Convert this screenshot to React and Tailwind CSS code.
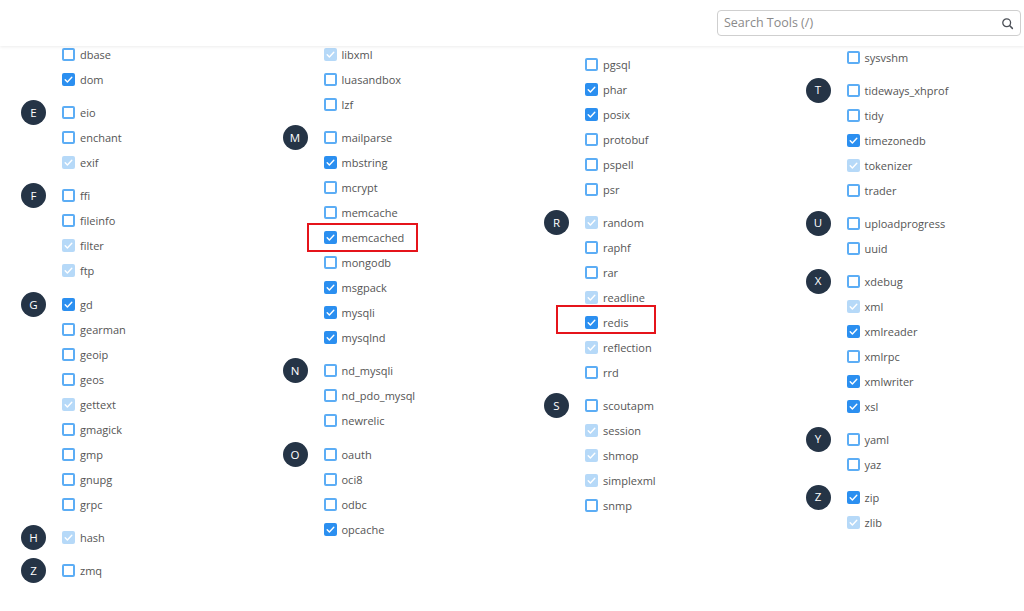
import React from "react";

// Extension list, grouped by initial letter. State: u = off, c = on, d = built-in (locked on)
const columns = [
  {
    offset: "mt-[-4.5px]",
    gap: "gap-[8.4px]",
    groups: [
      { letter: null, items: [["dbase", "u"], ["dom", "c"]] },
      { letter: "E", items: [["eio", "u"], ["enchant", "u"], ["exif", "d"]] },
      { letter: "F", items: [["ffi", "u"], ["fileinfo", "u"], ["filter", "d"], ["ftp", "d"]] },
      {
        letter: "G",
        items: [
          ["gd", "c"], ["gearman", "u"], ["geoip", "u"], ["geos", "u"], ["gettext", "d"],
          ["gmagick", "u"], ["gmp", "u"], ["gnupg", "u"], ["grpc", "u"],
        ],
      },
      { letter: "H", items: [["hash", "d"]] },
      { letter: "Z", items: [["zmq", "u"]] },
    ],
  },
  {
    offset: "mt-[-4.5px]",
    gap: "gap-[8.4px]",
    groups: [
      { letter: null, items: [["libxml", "d"], ["luasandbox", "u"], ["lzf", "u"]] },
      {
        letter: "M",
        items: [
          ["mailparse", "u"], ["mbstring", "c"], ["mcrypt", "u"], ["memcache", "u"],
          ["memcached", "c", "a"], ["mongodb", "u"], ["msgpack", "c"], ["mysqli", "c"], ["mysqlnd", "c"],
        ],
      },
      { letter: "N", items: [["nd_mysqli", "u"], ["nd_pdo_mysql", "u"], ["newrelic", "u"]] },
      { letter: "O", items: [["oauth", "u"], ["oci8", "u"], ["odbc", "u"], ["opcache", "c"]] },
    ],
  },
  {
    offset: "mt-[5.5px]",
    gap: "gap-[8.4px]",
    groups: [
      {
        letter: null,
        items: [["pgsql", "u"], ["phar", "c"], ["posix", "c"], ["protobuf", "u"], ["pspell", "u"], ["psr", "u"]],
      },
      {
        letter: "R",
        items: [
          ["random", "d"], ["raphf", "u"], ["rar", "u"], ["readline", "d"], ["redis", "c", "b"],
          ["reflection", "d"], ["rrd", "u"],
        ],
      },
      {
        letter: "S",
        items: [["scoutapm", "u"], ["session", "d"], ["shmop", "d"], ["simplexml", "d"], ["snmp", "u"]],
      },
    ],
  },
  {
    offset: "mt-[-1.5px]",
    gap: "gap-[8px]",
    groups: [
      { letter: null, items: [["sysvshm", "u"]] },
      {
        letter: "T",
        items: [["tideways_xhprof", "u"], ["tidy", "u"], ["timezonedb", "c"], ["tokenizer", "d"], ["trader", "u"]],
      },
      { letter: "U", items: [["uploadprogress", "u"], ["uuid", "u"]] },
      {
        letter: "X",
        items: [["xdebug", "u"], ["xml", "d"], ["xmlreader", "c"], ["xmlrpc", "u"], ["xmlwriter", "c"], ["xsl", "c"]],
      },
      { letter: "Y", items: [["yaml", "u"], ["yaz", "u"]] },
      { letter: "Z", items: [["zip", "c"], ["zlib", "d"]] },
    ],
  },
];

function Check() {
  return (
    <svg viewBox="0 0 13 13" className="w-[13px] h-[13px]">
      <polyline points="3.2,6.8 5.4,9 9.8,4.2" fill="none" stroke="#ffffff" strokeWidth="1.4" strokeLinecap="round" strokeLinejoin="round" />
    </svg>
  );
}

function Box({ state }) {
  if (state === "c") {
    return (
      <span className="w-[13px] h-[13px] rounded-[2px] bg-[#2b8ff0] flex shrink-0">
        <Check />
      </span>
    );
  }
  if (state === "d") {
    return (
      <span className="w-[13px] h-[13px] rounded-[2px] bg-[#b6d9f8] flex shrink-0">
        <Check />
      </span>
    );
  }
  return <span className="w-[13px] h-[13px] rounded-[2px] border-2 border-[#5cadf5] bg-white shrink-0" />;
}

function Item({ name, state, mark }) {
  return (
    <div className="relative h-[25px] flex items-center gap-[5px]">
      {mark === "a" && (
        <span className="absolute left-[-17px] top-[-1.5px] w-[111px] h-[28.5px] border-[2.5px] border-[#e5141b]" />
      )}
      {mark === "b" && (
        <span className="absolute left-[-29px] top-[-5px] w-[100px] h-[29.5px] border-[2.5px] border-[#e5141b]" />
      )}
      <Box state={state} />
      <span className="text-[11px] leading-none text-[#555555]">{name}</span>
    </div>
  );
}

function Group({ letter, items }) {
  return (
    <div className="flex">
      <div className="w-[41px] shrink-0">
        {letter && (
          <span className="w-[25px] h-[25px] rounded-full bg-[#253446] text-white text-[11.5px] flex items-center justify-center">
            {letter}
          </span>
        )}
      </div>
      <div className="flex flex-col">
        {items.map(([name, state, mark]) => (
          <Item key={name} name={name} state={state} mark={mark} />
        ))}
      </div>
    </div>
  );
}

export default function App() {
  return (
    <div className="w-[1024px] h-[611px] overflow-hidden bg-white flex flex-col font-['Open_Sans',sans-serif]">
      <header className="relative z-10 h-[46px] shrink-0 bg-white flex items-start justify-end pt-[10px] pr-[3px] shadow-[0_1px_3px_rgba(0,0,0,0.08)]">
        <div className="w-[304px] h-[26px] border border-[#cfcfcf] rounded-[4px] flex items-center justify-between pl-[6px] pr-[6px]">
          <span className="text-[12.5px] text-[#8a8a8a] pt-[1px]">Search Tools (/)</span>
          <svg viewBox="0 0 16 16" className="w-[13px] h-[13px]">
            <circle cx="7" cy="7" r="4.8" fill="none" stroke="#4b4f56" strokeWidth="1.6" />
            <line x1="10.5" y1="10.5" x2="14" y2="14" stroke="#4b4f56" strokeWidth="1.8" strokeLinecap="round" />
          </svg>
        </div>
      </header>
      <main className="flex-1 overflow-hidden pl-[21px] flex">
        {columns.map((col, i) => (
          <div key={i} className={`w-[261.5px] shrink-0 flex flex-col ${col.gap} ${col.offset}`}>
            {col.groups.map((g, j) => (
              <Group key={j} letter={g.letter} items={g.items} />
            ))}
          </div>
        ))}
      </main>
    </div>
  );
}
